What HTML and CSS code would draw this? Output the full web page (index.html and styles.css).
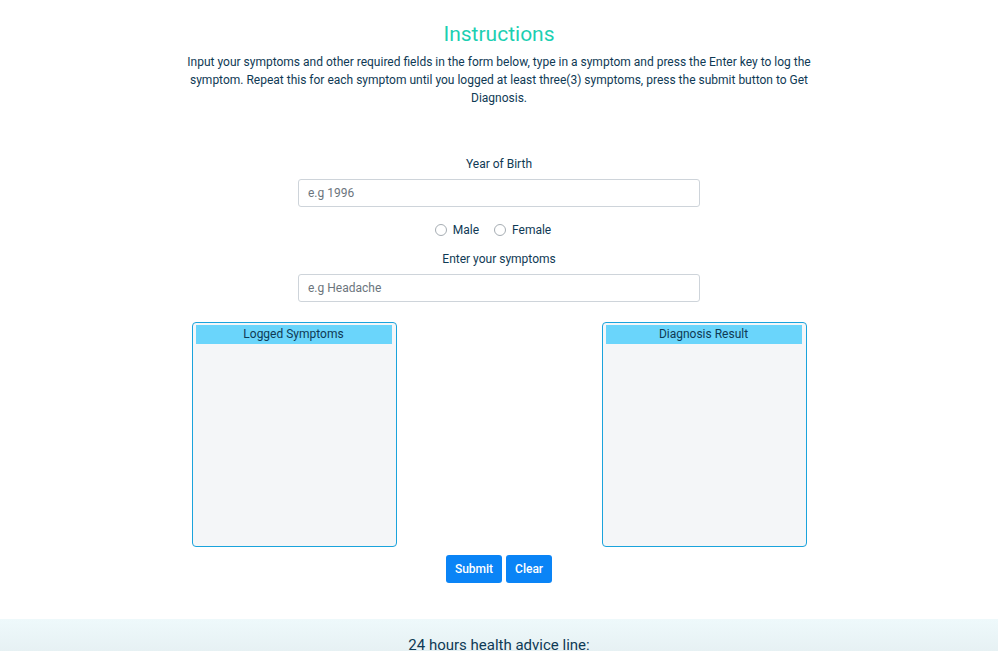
FILE: index.html
```html
<!DOCTYPE html>
<html lang="en">
<head>
<meta charset="utf-8">
<title>Diagnosis</title>
<link rel="stylesheet" href="styles.css">
</head>
<body>
<main class="page">
  <section class="intro">
    <h2 class="intro-title">Instructions</h2>
    <p class="intro-text">Input your symptoms and other required fields in the form below, type in a symptom and press the Enter key to log the symptom. Repeat this for each symptom until you logged at least three(3) symptoms, press the submit button to Get Diagnosis.</p>
  </section>

  <form class="form">
    <label class="field-label" for="yob">Year of Birth</label>
    <input class="field-input" id="yob" type="text" placeholder="e.g 1996">
    <div class="radios">
      <label class="radio"><input type="radio" name="gender"><span>Male</span></label>
      <label class="radio"><input type="radio" name="gender"><span>Female</span></label>
    </div>
    <label class="field-label" for="sym">Enter your symptoms</label>
    <input class="field-input" id="sym" type="text" placeholder="e.g Headache">

    <div class="panels">
      <div class="panel">
        <div class="panel-head">Logged Symptoms</div>
      </div>
      <div class="panel">
        <div class="panel-head">Diagnosis Result</div>
      </div>
    </div>

    <div class="actions">
      <button type="button" class="btn">Submit</button>
      <button type="button" class="btn">Clear</button>
    </div>
  </form>
</main>
<footer class="footer">
  <p class="footer-title">24 hours health advice line:</p>
</footer>
</body>
</html>
```
FILE: styles.css
```css
* { box-sizing: border-box; }
html, body { margin: 0; padding: 0; }
body {
  font-family: Roboto, "Noto Sans", Arial, sans-serif;
  color: #0f3a55;
  background: #ffffff;
  overflow: hidden;
  height: 651px;
}
.page {
  width: 640px;
  margin: 0 auto;
  text-align: center;
}
.intro { padding-top: 21px; }
.intro-title {
  margin: 0;
  font-size: 21px;
  line-height: 26px;
  font-weight: 400;
  color: #1ccfb2;
}
.intro-text {
  margin: 6px 0 0;
  font-size: 12px;
  line-height: 18px;
}
.form {
  margin-top: 49px;
  display: flex;
  flex-direction: column;
  align-items: center;
}
.field-label {
  font-size: 12px;
  line-height: 16px;
  display: block;
}
.field-input {
  width: 402px;
  height: 28px;
  margin-top: 7px;
  border: 1px solid #ced4da;
  border-radius: 3px;
  padding: 0 9px;
  font-family: inherit;
  font-size: 12px;
  color: #495057;
}
.field-input::placeholder { color: #6c757d; }
.radios {
  display: flex;
  gap: 15px;
  margin: 10px 0 8px;
  padding-right: 12px;
  height: 26px;
  align-items: center;
}
.radio {
  display: flex;
  align-items: center;
  font-size: 12px;
  gap: 6px;
}
.radio input {
  margin: 0;
  width: 12px;
  height: 12px;
  appearance: none;
  border: 1px solid #a6adb3;
  border-radius: 50%;
  background: #fff;
}
.panels {
  width: 615px;
  display: flex;
  justify-content: space-between;
  margin-top: 20px;
}
.panel {
  width: 205px;
  height: 225px;
  border: 1px solid #1aa3dc;
  border-radius: 4px;
  background: #f4f6f8;
  padding: 2px 4px 0 3px;
}
.panel-head {
  background: #6ad5fb;
  height: 19px;
  line-height: 19px;
  font-size: 12px;
  color: #0f3a55;
}
.actions {
  display: flex;
  gap: 4px;
  margin-top: 8px;
}
.btn {
  height: 28px;
  border: none;
  border-radius: 3px;
  background: #0a84f6;
  color: #fff;
  font-family: inherit;
  font-size: 12px;
  font-weight: 500;
  padding: 0 9px;
}
.footer {
  margin-top: 36px;
  height: 60px;
  background: linear-gradient(180deg, #eef9fb 0%, #e0eaed 100%);
  text-align: center;
  padding-top: 17px;
}
.footer-title {
  margin: 0;
  font-size: 15px;
  line-height: 18px;
  color: #0f3a55;
}
```
